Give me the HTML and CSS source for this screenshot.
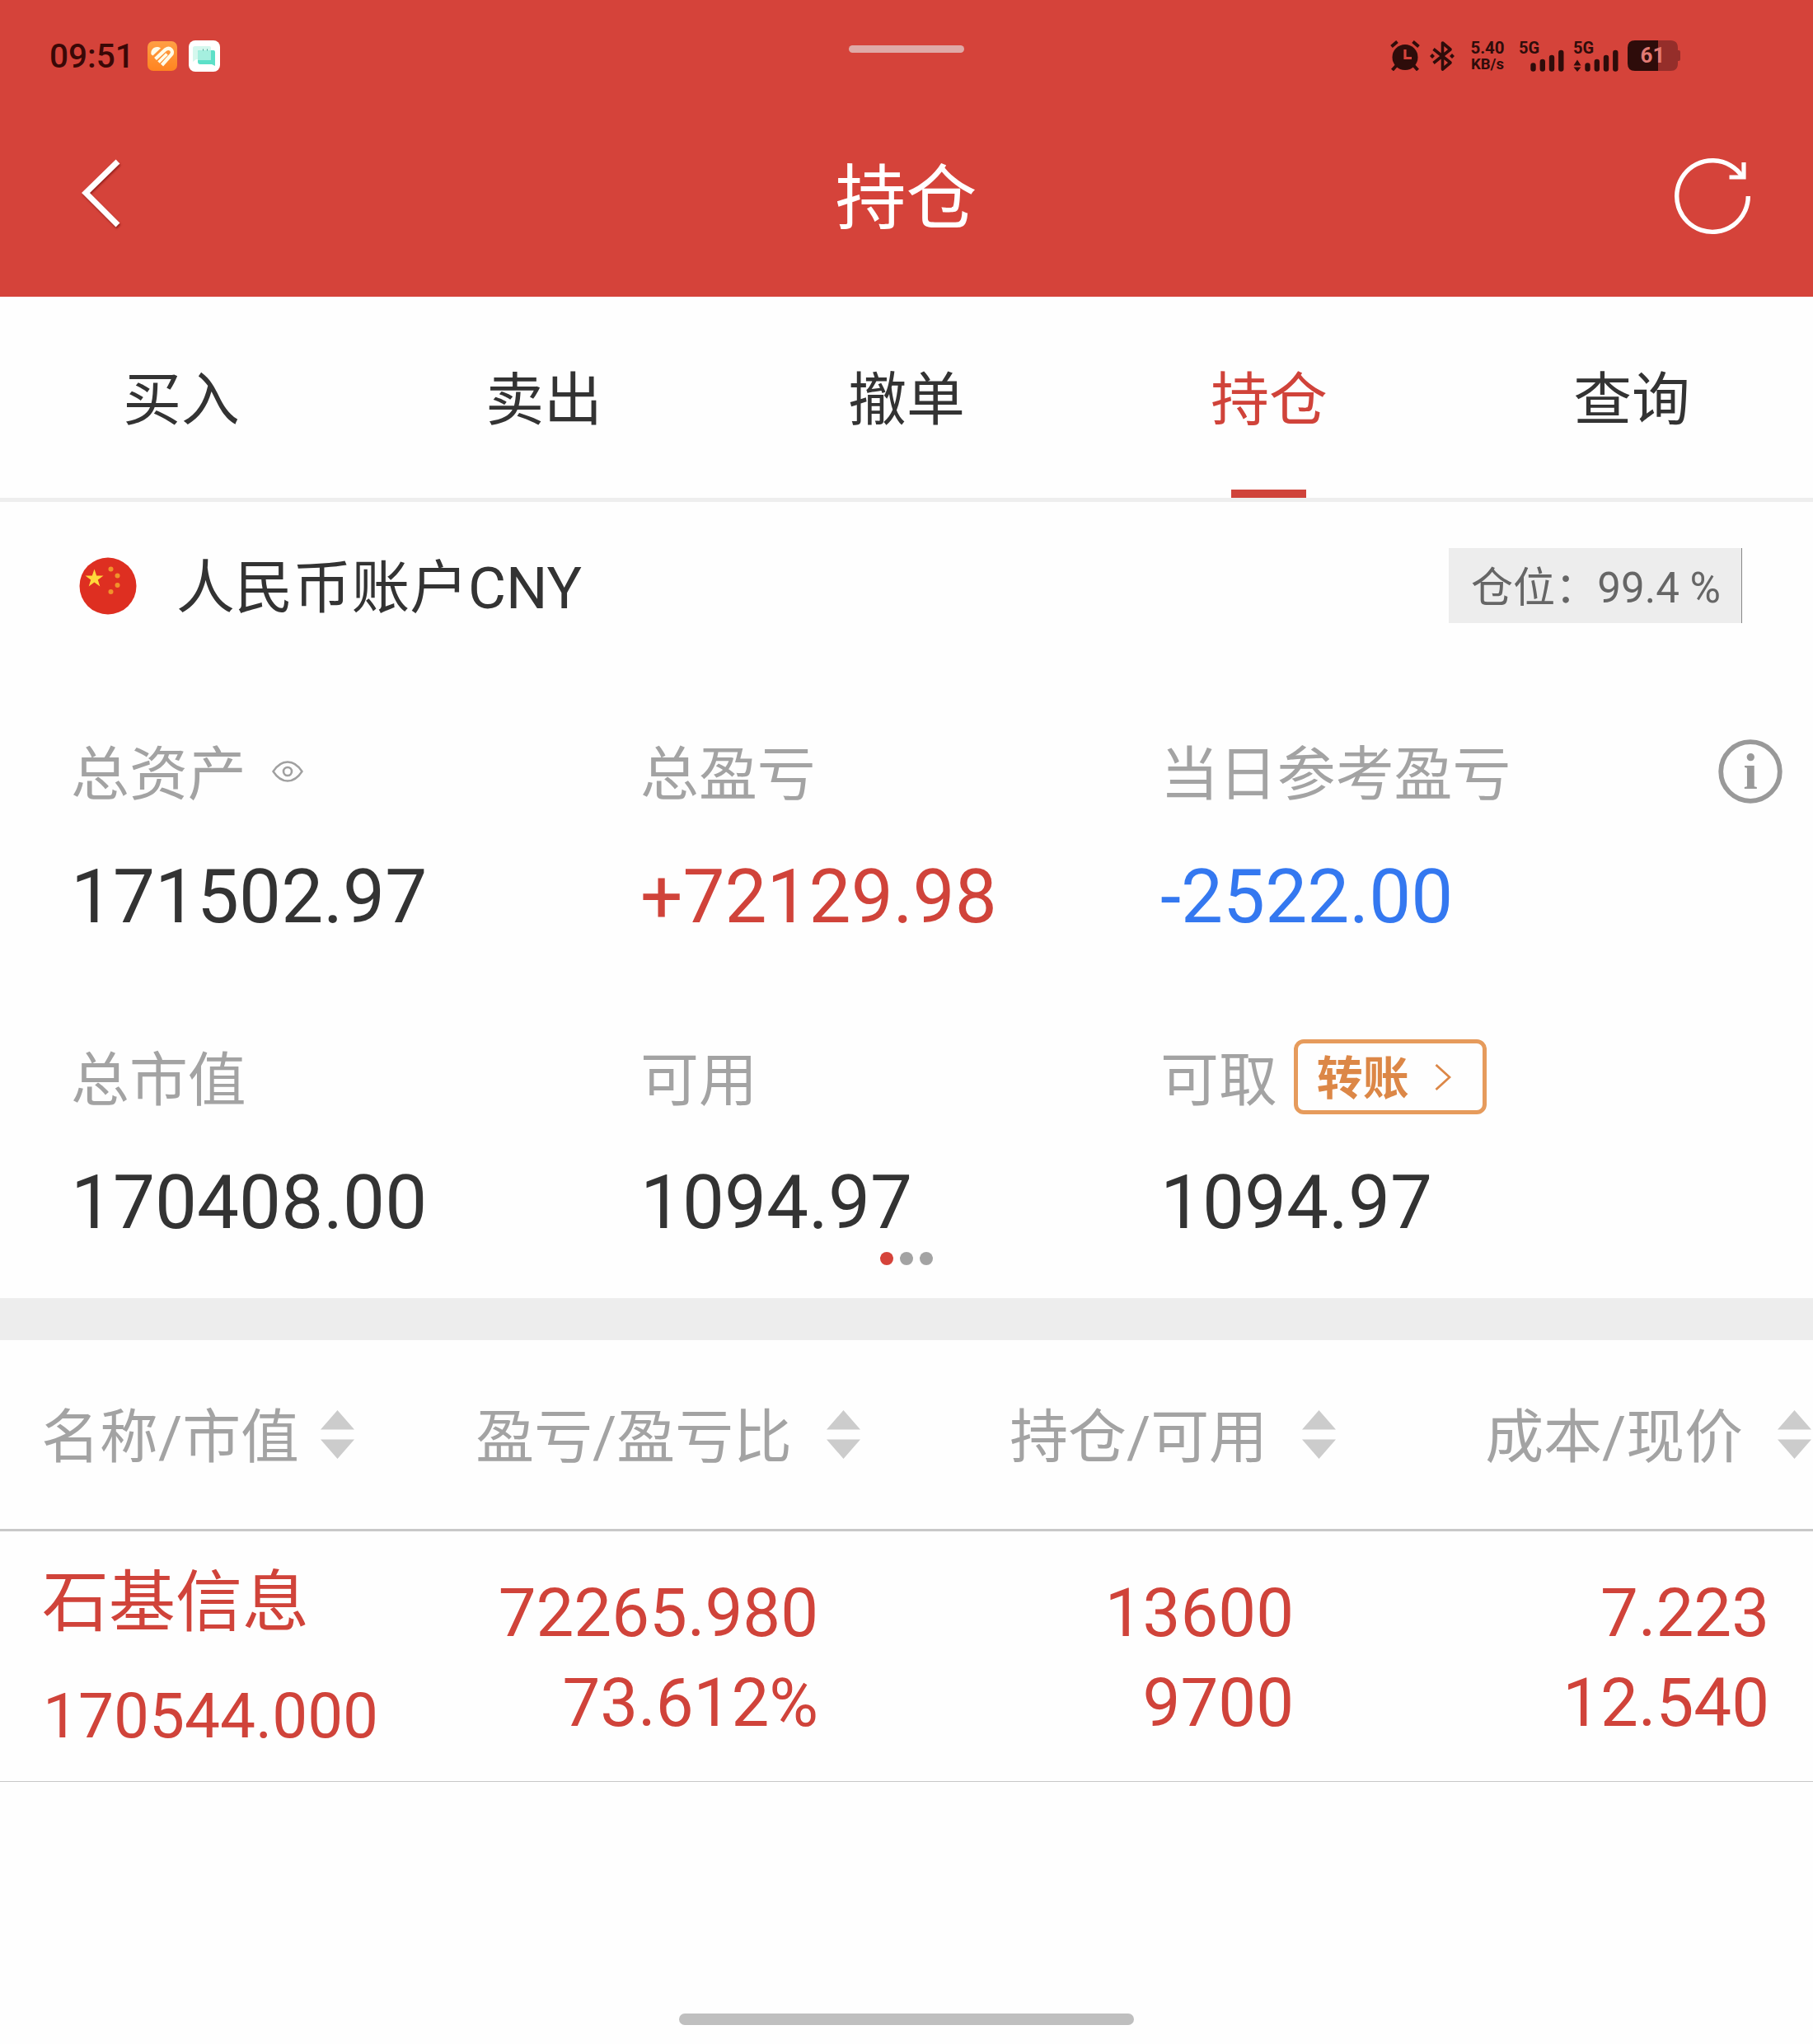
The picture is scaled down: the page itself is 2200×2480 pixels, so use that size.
FILE: index.html
```
<!DOCTYPE html>
<html lang="zh-CN">
  <head>
    <meta charset="UTF-8" />
    <meta name="viewport" content="width=device-width, initial-scale=1.0" />
    <title>持仓</title>
    <link rel="stylesheet" href="styles.css">
  </head>
  <body>
    <header class="header">
      <div class="status">
        <div class="status-left">
          <span class="time">09:51</span>
          <svg class="app-icon" width="36" height="36" viewBox="0 0 36 36">
            <defs>
              <linearGradient id="orange" x1="0" y1="0" x2="0" y2="1">
                <stop offset="0" stop-color="#ff9f45" />
                <stop offset="1" stop-color="#ff8420" />
              </linearGradient>
            </defs>
            <rect width="36" height="36" rx="7" fill="url(#orange)" />
            <path d="M4.500 16C3 9.500 10 4.500 16 8.500L6.500 17.500z" fill="#fffbe8" />
            <path d="M9.500 21.500L22 10C27 6.500 32.500 12 28.800 16.500L17.500 29" stroke="#fffbe8" stroke-width="4.200" fill="none" />
            <path d="M13.500 25.500L23.500 15.500" stroke="#fffbe8" stroke-width="3.600" fill="none" />
          </svg>
          <svg class="app-icon" width="38" height="38" viewBox="0 0 38 38">
            <rect width="38" height="38" rx="8" fill="#fff" />
            <path d="M7.500 7H25q2 0 2 2v14H9l-4 3V9.500q0-2.500 2.500-2.500z" fill="#d5f8ee" />
            <path d="M13 12h17q2 0 2 2v17l-4-2H14q-3 0-3-3V14q0-2 2-2z" fill="#5ce0c8" />
            <path d="M13 12h14v12H11V14q0-2 2-2z" fill="#a5efdf" />
            <path d="M17.500 10.500v2M22.500 10.500v2" stroke="#4aa596" />
          </svg>
        </div>
        <div class="handle"></div>
        <div class="status-right">
          <svg class="alarm" width="36" height="37" viewBox="0 0 36 37">
            <circle cx="18" cy="20.500" r="15.500" fill="#2e0c0a" />
            <path d="M1.500 7.500L8.500 1.500M27.500 1.500L34.500 7.500" stroke="#2e0c0a" stroke-width="4" />
            <path d="M8 30L2.500 36M28 30L33.500 36" stroke="#2e0c0a" stroke-width="4" />
            <path d="M18 11v10.500h8" stroke="#d5433a" stroke-width="3.200" fill="none" />
          </svg>
          <svg class="bluetooth" width="30" height="38" viewBox="0 0 30 38">
            <path d="M4.500 10.500L25 27L15.500 35V3L25 11L4.500 27.500" stroke="#2e0c0a" stroke-width="3.600" stroke-linejoin="round" fill="none" />
            <path d="M3 16l3 3-3 3-3-3zM27 16l3 3-3 3-3-3z" fill="#2e0c0a" />
          </svg>
          <div class="speed">
            <span>5.40</span>
            <span>KB/s</span>
          </div>
          <svg class="signal" width="56" height="48" viewBox="0 -5 56 48">
            <text x="0" y="15.500" class="net">5G</text>
            <path d="M17.500 30.500v4M28.800 26v8.500M40 21v13.500M51.300 15v19.500" stroke="#2e0c0a" stroke-width="6.400" stroke-linecap="round" />
          </svg>
          <svg class="signal" width="56" height="48" viewBox="0 -5 56 48">
            <text x="0" y="15.500" class="net">5G</text>
            <path d="M17.500 30.500v4M28.800 26v8.500M40 21v13.500M51.300 15v19.500" stroke="#2e0c0a" stroke-width="6.400" stroke-linecap="round" />
            <path d="M0.500 30.500L5 23.500L9.500 30.500zM0.500 32.500L5 38L9.500 32.500z" fill="#2e0c0a" />
          </svg>
          <svg class="battery" width="64" height="37" viewBox="0 0 64 37">
            <path d="M37 0H52q9 0 9 9v3h1q2 0 2 2v9q0 2-2 2h-1v3q0 9-9 9H37z" fill="#952e2a" />
            <path d="M37 0H9Q0 0 0 9v19q0 9 9 9h28z" fill="#2e0c0a" />
            <text x="15.500" y="27" class="level">61</text>
          </svg>
        </div>
      </div>
      <div class="navbar">
        <svg class="back" width="54" height="88" viewBox="0 0 54 88">
          <path d="M47 6L8 44L47 83" stroke="#fff" stroke-width="7" fill="none" />
        </svg>
        <h1>持仓</h1>
        <svg class="refresh" width="100" height="100" viewBox="0 0 100 100">
          <path d="M93.300 50A43.300 43.300 0 1 1 86 26" stroke="#fff" stroke-width="5.400" fill="none" />
          <path d="M88 9V27H70.500" stroke="#fff" stroke-width="5.200" fill="none" />
        </svg>
      </div>
    </header>

    <nav class="tabs">
      <a class="tab">买入</a>
      <a class="tab">卖出</a>
      <a class="tab">撤单</a>
      <a class="tab active">持仓</a>
      <a class="tab">查询</a>
    </nav>

    <section class="account">
      <svg class="flag" width="70" height="70" viewBox="0 0 70 70">
        <circle cx="35" cy="35" r="34.500" fill="#de2f21" />
        <path d="M18.500 14.500l2.700 8h8.300l-6.700 5 2.500 8-6.800-4.900-6.800 4.900 2.500-8-6.700-5h8.300z" fill="#ffd93b" />
        <g fill="#f0932b">
          <circle cx="38.500" cy="14.500" r="3" />
          <circle cx="46.500" cy="22.500" r="3" />
          <circle cx="46.500" cy="34" r="3" />
          <circle cx="38.500" cy="42" r="3" />
        </g>
      </svg>
      <h2>人民币账户CNY</h2>
      <div class="position">仓位：99.4 %</div>
    </section>

    <section class="stats">
      <div class="stat">
        <div class="label">
          总资产
          <svg class="eye" width="38" height="26" viewBox="0 0 38 26">
            <path d="M1.500 13Q9 1.500 19 1.500T36.500 13Q29 24.500 19 24.500T1.500 13z" stroke="#a0a0a0" stroke-width="2.400" fill="none" />
            <circle cx="19" cy="13" r="5" stroke="#a0a0a0" stroke-width="2.600" fill="none" />
          </svg>
        </div>
        <div class="value">171502.97</div>
      </div>
      <div class="stat">
        <div class="label">总盈亏</div>
        <div class="value up">+72129.98</div>
      </div>
      <div class="stat">
        <div class="label">
          当日参考盈亏
          <svg class="info" width="78" height="78" viewBox="0 0 78 78">
            <circle cx="39" cy="39" r="35.800" stroke="#999" stroke-width="5.800" fill="none" />
            <text x="39" y="60" class="info-i">i</text>
          </svg>
        </div>
        <div class="value down">-2522.00</div>
      </div>
      <div class="stat">
        <div class="label">总市值</div>
        <div class="value">170408.00</div>
      </div>
      <div class="stat">
        <div class="label">可用</div>
        <div class="value">1094.97</div>
      </div>
      <div class="stat">
        <div class="label">
          可取
          <div class="transfer">
            <span>转账</span>
            <svg width="20" height="34" viewBox="0 0 20 34">
              <path d="M1.500 2L18 17L1.500 32" stroke="#dc8747" stroke-width="2.800" fill="none" />
            </svg>
          </div>
        </div>
        <div class="value">1094.97</div>
      </div>
    </section>

    <div class="dots">
      <i class="dot current"></i>
      <i class="dot"></i>
      <i class="dot"></i>
    </div>

    <div class="divider"></div>

    <section class="holdings">
      <div class="row head">
        <div class="cell"><span>名称/市值</span><i class="sort"></i></div>
        <div class="cell"><span>盈亏/盈亏比</span><i class="sort"></i></div>
        <div class="cell"><span>持仓/可用</span><i class="sort"></i></div>
        <div class="cell"><span>成本/现价</span><i class="sort"></i></div>
      </div>
      <div class="row item">
        <div class="cell">
          <div class="name">石基信息</div>
          <div class="amount">170544.000</div>
        </div>
        <div class="cell">
          <div>72265.980</div>
          <div>73.612%</div>
        </div>
        <div class="cell">
          <div>13600</div>
          <div>9700</div>
        </div>
        <div class="cell">
          <div>7.223</div>
          <div>12.540</div>
        </div>
      </div>
    </section>

    <div class="home-bar"></div>
  </body>
</html>
```
FILE: styles.css
```
* {
  box-sizing: border-box;
}

body {
  margin: 0;
  width: 2200px;
  height: 2480px;
  display: flex;
  flex-direction: column;
  overflow: hidden;
  background: #fefefe;
  color: #333;
  font-family: Roboto, "Noto Sans CJK SC", sans-serif;
}

h1,
h2 {
  margin: 0;
  font-weight: 400;
}

svg {
  display: block;
  flex: none;
}

/* header */
.header {
  height: 360px;
  background: #d5433a;
}

.status {
  height: 124px;
  padding: 11px 161px 0 60px;
  display: grid;
  grid-template-columns: 970px 140px 1fr;
  align-items: center;
}

.status-left,
.status-right {
  display: flex;
  align-items: center;
}

.time {
  font-size: 40.5px;
  font-weight: 500;
  line-height: 46px;
  color: #3a0806;
  margin-right: 16px;
}

.app-icon {
  margin-right: 14px;
}

.handle {
  height: 9px;
  margin-bottom: 17px;
  border-radius: 5px;
  background: #dfaaa7;
}

.status-right {
  justify-content: flex-end;
}

.bluetooth {
  margin-left: 12px;
}

.speed {
  display: flex;
  flex-direction: column;
  align-items: center;
  width: 42px;
  margin: 0 17px 0 19px;
  font-size: 20.5px;
  font-weight: 700;
  line-height: 20px;
  color: #2e0c0a;
}

.speed span:last-child {
  font-size: 18.5px;
}

.signal {
  margin-right: 10px;
}

.net {
  font-size: 20px;
  font-weight: 700;
  fill: #2e0c0a;
}

.level {
  font-size: 26px;
  font-weight: 700;
  fill: #e27a74;
}

.navbar {
  height: 236px;
  padding: 0 72px 0 96px;
  display: flex;
  align-items: center;
  justify-content: space-between;
}

.navbar h1 {
  font-size: 86px;
  line-height: 120px;
  color: #fff;
}

.back {
  margin: 0 21px 16px 0;
  filter: drop-shadow(1px 2px 1px rgba(90, 0, 0, 0.5));
}

.refresh {
  margin-bottom: 8px;
}

/* tabs */
.tabs {
  display: flex;
  height: 249px;
  border-bottom: 5px solid #eee;
}

.tab {
  flex: 1;
  position: relative;
  padding-top: 8px;
  font-size: 70.8px;
  line-height: 236px;
  text-align: center;
}

.tab.active {
  color: #d0433a;
}

.tab.active::after {
  content: "";
  position: absolute;
  left: 50%;
  bottom: 0;
  width: 91px;
  height: 10px;
  margin-left: -46px;
  background: #d0433a;
}

/* account */
.account {
  height: 203px;
  padding: 0 86px 0 96px;
  display: flex;
  align-items: center;
}

.account h2 {
  margin: 6px auto 0 48px;
  font-size: 70.8px;
  line-height: 100px;
}

.position {
  width: 356px;
  height: 91px;
  padding-left: 27px;
  border-right: 1px solid #888;
  background: #ededed;
  color: #666;
  font-size: 51.1px;
  line-height: 97px;
  white-space: nowrap;
}

.stats {
  display: grid;
  grid-template-columns: 691px 631px 1fr;
  row-gap: 118px;
  padding: 78px 0 0 86px;
}

.label {
  display: flex;
  align-items: center;
  height: 100px;
  margin-bottom: 43px;
  color: #a3a3a3;
  font-size: 70.9px;
  line-height: 98px;
}

.value {
  font-size: 90.8px;
  line-height: 110px;
}

.value.up {
  color: #d0433a;
}

.value.down {
  color: #3478f0;
}

.eye {
  margin: 0 0 9px 31px;
}

.info {
  margin: 0 37px 8px auto;
}

.info-i {
  font-family: "Liberation Serif", serif;
  font-size: 62px;
  font-weight: 700;
  text-anchor: middle;
  fill: #999;
}

.transfer {
  display: flex;
  align-items: center;
  width: 234px;
  height: 91px;
  margin: 0 0 9px 20px;
  padding-left: 23px;
  border: 5px solid #e69b5c;
  border-radius: 12px;
  color: #dc8747;
  font-size: 56px;
  font-weight: 700;
  line-height: 86px;
}

.transfer span {
  padding-top: 5px;
}

.transfer svg {
  margin-left: 31px;
}

.dots {
  display: flex;
  justify-content: center;
  gap: 8px;
  height: 61px;
  padding-top: 5px;
}

.dot {
  width: 16px;
  height: 16px;
  border-radius: 50%;
  background: #a3a3a3;
}

.dot.current {
  background: #d5433a;
}

.divider {
  height: 51px;
  background: #ededed;
}

/* holdings */
.row {
  display: grid;
  grid-template-columns: 430px 614px 577px 577px;
}

.head {
  height: 232px;
  border-bottom: 3px solid #c8c8c8;
  color: #a3a3a3;
  font-size: 70.9px;
  line-height: 100px;
}

.head .cell {
  display: flex;
  align-items: center;
  justify-content: flex-end;
  gap: 42px;
}

.head .cell:first-child {
  gap: 26px;
}

.head span {
  padding-top: 6px;
}

.sort {
  width: 41px;
  height: 59px;
  background: #ccc;
  clip-path: polygon(50% 0, 100% 40%, 0 40%, 50% 0, 50% 100%, 0 60%, 100% 60%, 50% 100%);
}

.item {
  height: 304px;
  border-bottom: 1px solid #c8c8c8;
  color: #d0433a;
}

.item .cell {
  padding: 45px 51px 0 0;
  font-size: 81.6px;
  line-height: 109px;
  text-align: right;
}

.item .cell:first-child {
  padding: 32px 0 0 51px;
  text-align: left;
}

.item .name {
  font-size: 81px;
}

.item .amount {
  margin-top: 33px;
  padding-left: 1px;
  font-size: 76.5px;
  line-height: 100px;
}

.home-bar {
  width: 552px;
  height: 14px;
  margin: auto auto 23px;
  border-radius: 7px;
  background: #bfbfbf;
}
```
